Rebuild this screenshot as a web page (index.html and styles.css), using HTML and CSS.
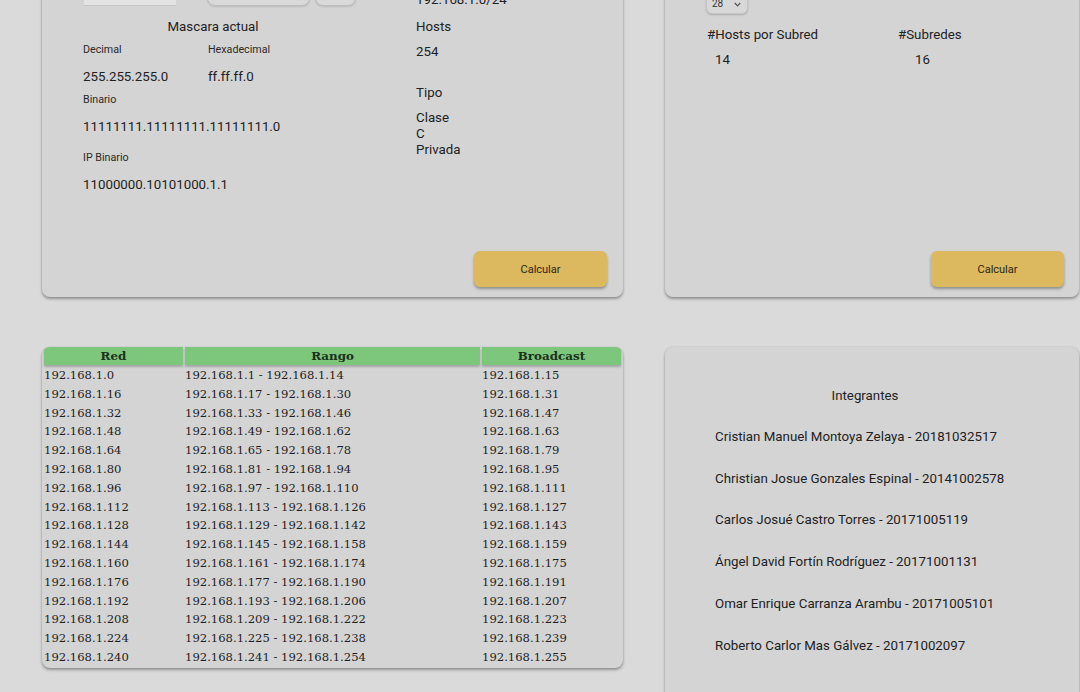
FILE: index.html
```html
<!DOCTYPE html>
<html lang="es">
<head>
<meta charset="utf-8">
<title>Calculadora de Subredes</title>
<link rel="stylesheet" href="styles.css">
</head>
<body>
<div class="page">
  <section class="card card-top card-ip">
    <div class="ip-body">
      <div class="col-mask">
        <div class="inputs-row">
          <div class="fake-input"></div>
          <div class="fake-btn fb-wide"></div>
          <div class="fake-btn fb-narrow"></div>
        </div>
        <div class="mask-title">Mascara actual</div>
        <div class="mask-grid">
          <div class="field"><div class="lbl">Decimal</div><div class="val">255.255.255.0</div></div>
          <div class="field"><div class="lbl">Hexadecimal</div><div class="val">ff.ff.ff.0</div></div>
        </div>
        <div class="lbl">Binario</div>
        <div class="val">11111111.11111111.11111111.0</div>
        <div class="lbl lbl-ip">IP Binario</div>
        <div class="val">11000000.10101000.1.1</div>
      </div>
      <div class="col-info">
        <div class="ival net">192.168.1.0/24</div>
        <div class="ihead">Hosts</div>
        <div class="ival">254</div>
        <div class="ihead tipo">Tipo</div>
        <div class="ival">Clase<br>C<br>Privada</div>
      </div>
    </div>
    <div class="actions"><button class="btn-calc">Calcular</button></div>
  </section>

  <section class="card card-top card-sub">
    <div class="fake-select">
      <span>28</span>
      <svg class="chev" width="7" height="5" viewBox="0 0 7 5"><polyline points="0.8,1 3.5,3.8 6.2,1" fill="none" stroke="#555" stroke-width="1.2"/></svg>
    </div>
    <div class="stats">
      <div class="stat">
        <div class="ihead">#Hosts por Subred</div>
        <div class="ival v-hosts">14</div>
      </div>
      <div class="stat">
        <div class="ihead">#Subredes</div>
        <div class="ival v-subs">16</div>
      </div>
    </div>
    <div class="actions"><button class="btn-calc">Calcular</button></div>
  </section>

  <section class="card card-table">
    <table class="subnets">
      <thead>
        <tr><th class="c-red">Red</th><th class="c-rango">Rango</th><th class="c-bc">Broadcast</th></tr>
      </thead>
      <tbody>
        <tr><td>192.168.1.0</td><td>192.168.1.1 - 192.168.1.14</td><td>192.168.1.15</td></tr>
        <tr><td>192.168.1.16</td><td>192.168.1.17 - 192.168.1.30</td><td>192.168.1.31</td></tr>
        <tr><td>192.168.1.32</td><td>192.168.1.33 - 192.168.1.46</td><td>192.168.1.47</td></tr>
        <tr><td>192.168.1.48</td><td>192.168.1.49 - 192.168.1.62</td><td>192.168.1.63</td></tr>
        <tr><td>192.168.1.64</td><td>192.168.1.65 - 192.168.1.78</td><td>192.168.1.79</td></tr>
        <tr><td>192.168.1.80</td><td>192.168.1.81 - 192.168.1.94</td><td>192.168.1.95</td></tr>
        <tr><td>192.168.1.96</td><td>192.168.1.97 - 192.168.1.110</td><td>192.168.1.111</td></tr>
        <tr><td>192.168.1.112</td><td>192.168.1.113 - 192.168.1.126</td><td>192.168.1.127</td></tr>
        <tr><td>192.168.1.128</td><td>192.168.1.129 - 192.168.1.142</td><td>192.168.1.143</td></tr>
        <tr><td>192.168.1.144</td><td>192.168.1.145 - 192.168.1.158</td><td>192.168.1.159</td></tr>
        <tr><td>192.168.1.160</td><td>192.168.1.161 - 192.168.1.174</td><td>192.168.1.175</td></tr>
        <tr><td>192.168.1.176</td><td>192.168.1.177 - 192.168.1.190</td><td>192.168.1.191</td></tr>
        <tr><td>192.168.1.192</td><td>192.168.1.193 - 192.168.1.206</td><td>192.168.1.207</td></tr>
        <tr><td>192.168.1.208</td><td>192.168.1.209 - 192.168.1.222</td><td>192.168.1.223</td></tr>
        <tr><td>192.168.1.224</td><td>192.168.1.225 - 192.168.1.238</td><td>192.168.1.239</td></tr>
        <tr><td>192.168.1.240</td><td>192.168.1.241 - 192.168.1.254</td><td>192.168.1.255</td></tr>
      </tbody>
    </table>
  </section>

  <section class="card card-team">
    <div class="team-title">Integrantes</div>
    <div class="member">Cristian Manuel Montoya Zelaya - 20181032517</div>
    <div class="member">Christian Josue Gonzales Espinal - 20141002578</div>
    <div class="member">Carlos Josué Castro Torres - 20171005119</div>
    <div class="member">Ángel David Fortín Rodríguez - 20171001131</div>
    <div class="member">Omar Enrique Carranza Arambu - 20171005101</div>
    <div class="member">Roberto Carlor Mas Gálvez - 20171002097</div>
  </section>
</div>
</body>
</html>
```

FILE: styles.css
```css
html, body {
  margin: 0;
  padding: 0;
}

body {
  background: #dadada;
  font-family: Roboto, "Liberation Sans", Arial, sans-serif;
  color: #222;
  overflow: hidden;
  height: 692px;
}

.page {
  display: grid;
  grid-template-columns: 581px 414px;
  column-gap: 42px;
  row-gap: 50px;
  padding-left: 42px;
  margin-top: -40px;
}

.card {
  background: #d4d4d4;
  border-radius: 8px;
  box-shadow: 0 2px 3px rgba(0, 0, 0, 0.33), 0 0 2px rgba(0, 0, 0, 0.12);
  box-sizing: border-box;
}

.card-top {
  height: 337px;
  display: flex;
  flex-direction: column;
}

.card-ip {
  padding: 24px 16px 10px 41px;
}

.card-sub {
  padding: 24px 15px 10px 41px;
}

.actions {
  margin-top: auto;
  display: flex;
  justify-content: flex-end;
}

.btn-calc {
  width: 133px;
  height: 36px;
  border: 0;
  border-radius: 6px;
  background: #dcb95e;
  box-shadow: 0 2px 3px rgba(0, 0, 0, 0.33);
  font-family: Roboto, "Liberation Sans", sans-serif;
  font-size: 11px;
  color: #2b2516;
  padding: 0;
}

/* IP card */
.ip-body {
  display: flex;
  gap: 73px;
}

.col-mask {
  width: 260px;
  flex-shrink: 0;
}

.col-info {
  flex-shrink: 0;
}

.inputs-row {
  display: flex;
  height: 22px;
  width: 280px;
}

.fake-input {
  flex: 0 0 92px;
  margin-left: 1px;
  background: #e3e3e3;
  border-bottom: 1px solid #c6c6c6;
  box-sizing: border-box;
}

.fake-btn {
  border: 1px solid #bdbdbd;
  border-radius: 8px;
  background: #d9d9d9;
  box-shadow: 0 1px 2px rgba(0, 0, 0, 0.12);
  box-sizing: border-box;
}

.fb-wide {
  flex: 0 0 103px;
  margin-left: 31px;
}

.fb-narrow {
  flex: 0 0 41px;
  margin-left: 5px;
}

.mask-title {
  margin-top: 13px;
  font-size: 13.3px;
  line-height: 16px;
  text-align: center;
}

.mask-grid {
  display: grid;
  grid-template-columns: 125px 135px;
}

.field {
  text-align: left;
}

.lbl {
  margin-top: 8px;
  font-size: 10.7px;
  line-height: 14px;
  color: #2a2a2a;
}

.lbl-ip {
  margin-top: 16px;
}

.val {
  margin-top: 12px;
  font-size: 13.3px;
  line-height: 16px;
  white-space: nowrap;
}

.ihead {
  font-size: 13.3px;
  line-height: 16px;
}

.ival {
  margin-top: 9px;
  font-size: 13.3px;
  line-height: 16px;
}

.col-info .ihead {
  margin-top: 11px;
}

.col-info .net {
  margin-top: 8px;
}

.col-info .tipo {
  margin-top: 25px;
}

/* subnet card */
.fake-select {
  margin-top: 8px;
  width: 42px;
  height: 22px;
  box-sizing: border-box;
  border: 1px solid #c4c4c4;
  border-radius: 6px;
  background: #d8d8d8;
  box-shadow: 0 1px 2px rgba(0, 0, 0, 0.2);
  display: flex;
  align-items: flex-end;
  justify-content: space-between;
  padding: 0 6px 3px 5px;
  font-size: 10px;
  line-height: 12px;
  color: #333;
}

.chev {
  margin-bottom: 3px;
}

.stats {
  display: grid;
  grid-template-columns: 191px auto;
}

.stat .ihead {
  margin-top: 13px;
  margin-left: 1px;
}

.v-hosts {
  padding-left: 9px;
}

.v-subs {
  padding-left: 18px;
}

/* table card */
.card-table {
  overflow: hidden;
  height: 321px;
}

.subnets {
  border-collapse: separate;
  border-spacing: 2px;
  margin-top: -2px;
  table-layout: fixed;
  width: 581px;
  font-family: "DejaVu Serif", "Liberation Serif", serif;
  font-size: 11.6px;
  color: #1e1e1e;
}

.subnets th {
  background: #7cc77c;
  color: #1b301b;
  font-weight: bold;
  font-size: 11.9px;
  text-align: center;
  padding: 1px;
  line-height: 16px;
  box-shadow: 0 2px 2px rgba(0, 0, 0, 0.22);
}

.subnets td {
  padding: 1px 1px 1px 0;
  line-height: 14.8px;
  text-align: left;
  white-space: nowrap;
}

.c-red {
  width: 137px;
}

.c-rango {
  width: 293px;
}

.c-bc {
  width: 137px;
}

/* team card */
.card-team {
  min-height: 400px;
  padding: 41px 64px 0 50px;
  display: flex;
  flex-direction: column;
  gap: 25.8px;
  font-size: 13.3px;
  line-height: 16px;
}

.team-title {
  text-align: center;
  margin-bottom: -1px;
}
```
